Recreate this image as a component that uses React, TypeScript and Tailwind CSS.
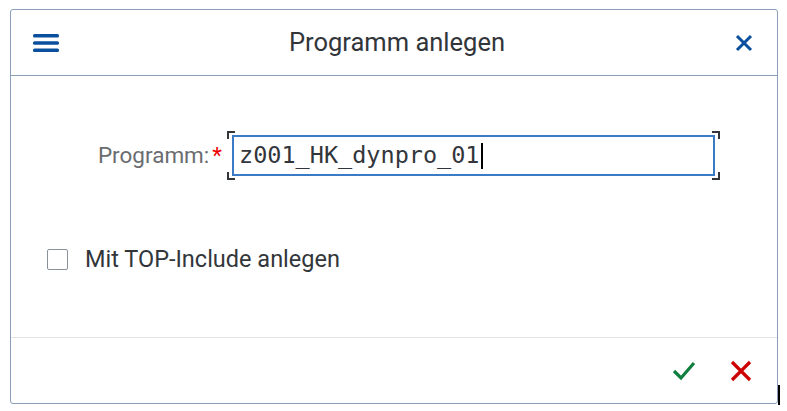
export default function App() {
  return (
    <div className="relative h-[411px] w-[787px] bg-white pl-[10px] pt-[9px]" style={{ fontFamily: 'Roboto, "Noto Sans", sans-serif' }}>
      <div className="flex h-[395px] w-[768px] flex-col rounded-[3px] border border-[#8aa0b9] bg-white">
        <header className="flex h-[66px] items-center justify-between border-b border-[#8aa0b9] pl-[22px] pr-[24px]">
          <svg width="26" height="20" viewBox="0 0 26 20" className="text-[#0a4f9e]">
            <rect x="0" y="1" width="26" height="3.5" rx="1.5" fill="currentColor" />
            <rect x="0" y="8.3" width="26" height="3.5" rx="1.5" fill="currentColor" />
            <rect x="0" y="15.5" width="26" height="3.5" rx="1.5" fill="currentColor" />
          </svg>
          <h1 className="text-[25.5px] text-[#32363a]">Programm anlegen</h1>
          <svg width="18" height="18" viewBox="0 0 18 18">
            <path d="M2 2 L16 16 M16 2 L2 16" stroke="#0a4f9e" strokeWidth="3" />
          </svg>
        </header>

        <main className="flex flex-1 flex-col px-[36px]">
          <div className="mt-[59px] flex items-center">
            <label className="w-[185px] pr-[10px] text-right text-[22.5px] text-[#6a6d70]">
              Programm:<span className="ml-[3px] text-[#e00]">*</span>
            </label>
            <div className="relative">
              <span className="absolute -left-[5px] -top-[4px] h-[8px] w-[8px] border-l-2 border-t-2 border-[#32363a]" />
              <span className="absolute -right-[5px] -top-[4px] h-[8px] w-[8px] border-r-2 border-t-2 border-[#32363a]" />
              <span className="absolute -bottom-[4px] -left-[5px] h-[8px] w-[8px] border-b-2 border-l-2 border-[#32363a]" />
              <span className="absolute -bottom-[4px] -right-[5px] h-[8px] w-[8px] border-b-2 border-r-2 border-[#32363a]" />
              <div className="flex h-[41px] w-[483px] items-center border-2 border-[#3b7ac4] px-[5px] text-[23.5px] text-[#32363a]" style={{ fontFamily: '"DejaVu Sans Mono", monospace' }}>
                z001_HK_dynpro_01
                <span className="ml-[1px] inline-block h-[26px] w-[2px] bg-black" />
              </div>
            </div>
          </div>

          <div className="mt-[66px] flex items-center">
            <span className="h-[21px] w-[21px] rounded-[2px] border border-[#89919a]" />
            <span className="ml-[17px] text-[23.5px] text-[#32363a]">Mit TOP-Include anlegen</span>
          </div>
        </main>

        <footer className="flex h-[66px] items-center justify-end gap-[34px] border-t border-[#e2e2e2] pr-[25px]">
          <svg width="24" height="20" viewBox="0 0 24 20">
            <path d="M2 10 L9 17 L22 2" fill="none" stroke="#107e3e" strokeWidth="3.2" />
          </svg>
          <svg width="22" height="22" viewBox="0 0 22 22">
            <path d="M2 2 L20 20 M20 2 L2 20" stroke="#c00" strokeWidth="3.2" />
          </svg>
        </footer>
      </div>
      <span className="absolute left-[778px] top-[385px] h-[20px] w-[2px] bg-black" />
    </div>
  )
}
